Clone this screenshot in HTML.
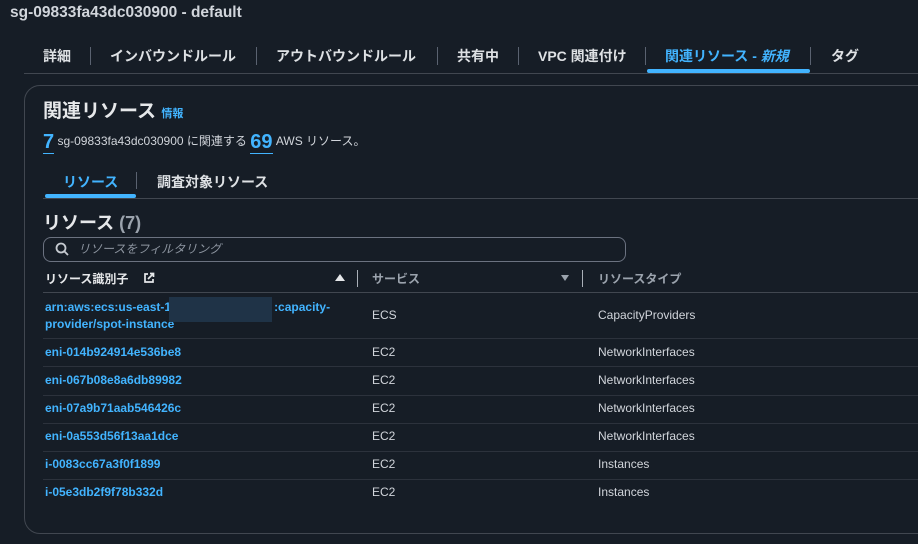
<!DOCTYPE html>
<html><head><meta charset="utf-8"><style>
*{margin:0;padding:0;box-sizing:border-box}
body{width:918px;height:544px;background:#161d26;font-family:"Liberation Sans","Noto Sans CJK JP",sans-serif;color:#d1d5db;position:relative;overflow:hidden}
.a{position:absolute;white-space:nowrap}
.b{font-weight:bold}
.tab{font-size:14px;font-weight:bold;color:#dee1e4;top:46px}
.sep{position:absolute;width:1px;background:#5a6270}
.lnk{color:#42b4ff;font-size:12px;font-weight:bold}
.cell{font-size:12px;color:#d1d5db}
.hr{position:absolute;left:43px;right:0;height:1px;background:#2c323c}
</style></head><body>
<div class="a b" style="left:10px;top:4px;font-size:15.5px;color:#d1d5db">sg-09833fa43dc030900 - default</div>

<div class="a tab" style="left:43px">詳細</div>
<div class="sep" style="left:90px;top:47px;height:18px"></div>
<div class="a tab" style="left:110px">インバウンドルール</div>
<div class="sep" style="left:256px;top:47px;height:18px"></div>
<div class="a tab" style="left:276px">アウトバウンドルール</div>
<div class="sep" style="left:437px;top:47px;height:18px"></div>
<div class="a tab" style="left:457px">共有中</div>
<div class="sep" style="left:518px;top:47px;height:18px"></div>
<div class="a tab" style="left:538px">VPC 関連付け</div>
<div class="sep" style="left:645px;top:47px;height:18px"></div>
<div class="a tab" style="left:665px;color:#42b4ff">関連リソース - <i>新規</i></div>
<div class="a" style="left:647px;top:69px;width:163px;height:4px;border-radius:2px;background:#42b4ff"></div>
<div class="sep" style="left:810px;top:47px;height:18px"></div>
<div class="a tab" style="left:831px">タグ</div>
<div class="a" style="left:24px;right:0;top:73px;height:1px;background:#414750"></div>

<div class="a" style="left:24px;top:85px;width:960px;height:449px;border:1px solid #414750;border-radius:16px"></div>

<div class="a b" style="left:43px;top:96px;font-size:19px;color:#e6e8ea">関連リソース <span style="font-size:11px;color:#42b4ff">情報</span></div>
<div class="a" style="left:43px;top:131px;font-size:12px;color:#d1d5db"><span style="font-size:20px;font-weight:bold;color:#42b4ff;border-bottom:1px solid #42b4ff;vertical-align:-3px">7</span> sg-09833fa43dc030900 に関連する <span style="font-size:20px;font-weight:bold;color:#42b4ff;border-bottom:1px solid #42b4ff;vertical-align:-3px">69</span> AWS リソース。</div>

<div class="a b" style="left:63px;top:172px;font-size:14px;color:#42b4ff">リソース</div>
<div class="sep" style="left:136px;top:172px;height:17px"></div>
<div class="a b" style="left:157px;top:172px;font-size:14px;color:#dee1e4">調査対象リソース</div>
<div class="a" style="left:45px;top:194px;width:91px;height:4px;border-radius:2px;background:#42b4ff"></div>
<div class="a" style="left:43px;right:0;top:198px;height:1px;background:#414750"></div>

<div class="a b" style="left:43px;top:209px;font-size:18px;color:#e6e8ea">リソース <span style="color:#9ba3ad">(7)</span></div>
<div class="a" style="left:43px;top:237px;width:583px;height:25px;border:1px solid #6b7280;border-radius:8px"></div>
<svg class="a" style="left:55px;top:242px" width="14" height="14" viewBox="0 0 14 14"><circle cx="6" cy="6" r="4.5" fill="none" stroke="#c5cad0" stroke-width="1.8"/><path d="M9.3 9.3 13 13" stroke="#c5cad0" stroke-width="1.8"/></svg>
<div class="a" style="left:78px;top:240px;font-size:12px;color:#8d95a0;font-style:italic">リソースをフィルタリング</div>

<div class="a b" style="left:45px;top:270px;font-size:12px;color:#e6e8ea">リソース識別子</div>
<svg class="a" style="left:143px;top:272px" width="12" height="12" viewBox="0 0 12 12"><path d="M5 2H2v8h8V7M7 1.5h3.5V5M10.5 1.5 5 7" fill="none" stroke="#e6e8ea" stroke-width="1.7"/></svg>
<div class="a" style="left:335px;top:274px;width:0;height:0;border-left:5px solid transparent;border-right:5px solid transparent;border-bottom:7px solid #e6e8ea"></div>
<div class="sep" style="left:357px;top:270px;height:17px;background:#aab0b8"></div>
<div class="a b" style="left:372px;top:270px;font-size:12px;color:#9ba3ad">サービス</div>
<div class="a" style="left:561px;top:275px;width:0;height:0;border-left:4px solid transparent;border-right:4px solid transparent;border-top:6px solid #9ba3ad"></div>
<div class="sep" style="left:582px;top:270px;height:17px;background:#aab0b8"></div>
<div class="a b" style="left:598px;top:270px;font-size:12px;color:#9ba3ad">リソースタイプ</div>
<div class="a" style="left:43px;right:0;top:292px;height:1px;background:#414750"></div>

<div class="a lnk" style="left:45px;top:299px;line-height:17px">arn:aws:ecs:us-east-1<span style="display:inline-block;width:103px"></span>:capacity-<br>provider/spot-instance</div>
<div class="a" style="left:169px;top:297px;width:103px;height:25px;background:#1f3347"></div>
<div class="a cell" style="left:372px;top:308px">ECS</div>
<div class="a cell" style="left:598px;top:308px">CapacityProviders</div>
<div class="hr" style="top:338px"></div>

<div class="a lnk" style="left:45px;top:345px">eni-014b924914e536be8</div><div class="a cell" style="left:372px;top:345px">EC2</div><div class="a cell" style="left:598px;top:345px">NetworkInterfaces</div>
<div class="hr" style="top:366px"></div>
<div class="a lnk" style="left:45px;top:373px">eni-067b08e8a6db89982</div><div class="a cell" style="left:372px;top:373px">EC2</div><div class="a cell" style="left:598px;top:373px">NetworkInterfaces</div>
<div class="hr" style="top:395px"></div>
<div class="a lnk" style="left:45px;top:401px">eni-07a9b71aab546426c</div><div class="a cell" style="left:372px;top:401px">EC2</div><div class="a cell" style="left:598px;top:401px">NetworkInterfaces</div>
<div class="hr" style="top:423px"></div>
<div class="a lnk" style="left:45px;top:429px">eni-0a553d56f13aa1dce</div><div class="a cell" style="left:372px;top:429px">EC2</div><div class="a cell" style="left:598px;top:429px">NetworkInterfaces</div>
<div class="hr" style="top:451px"></div>
<div class="a lnk" style="left:45px;top:457px">i-0083cc67a3f0f1899</div><div class="a cell" style="left:372px;top:457px">EC2</div><div class="a cell" style="left:598px;top:457px">Instances</div>
<div class="hr" style="top:479px"></div>
<div class="a lnk" style="left:45px;top:485px">i-05e3db2f9f78b332d</div><div class="a cell" style="left:372px;top:485px">EC2</div><div class="a cell" style="left:598px;top:485px">Instances</div>
</body></html>
